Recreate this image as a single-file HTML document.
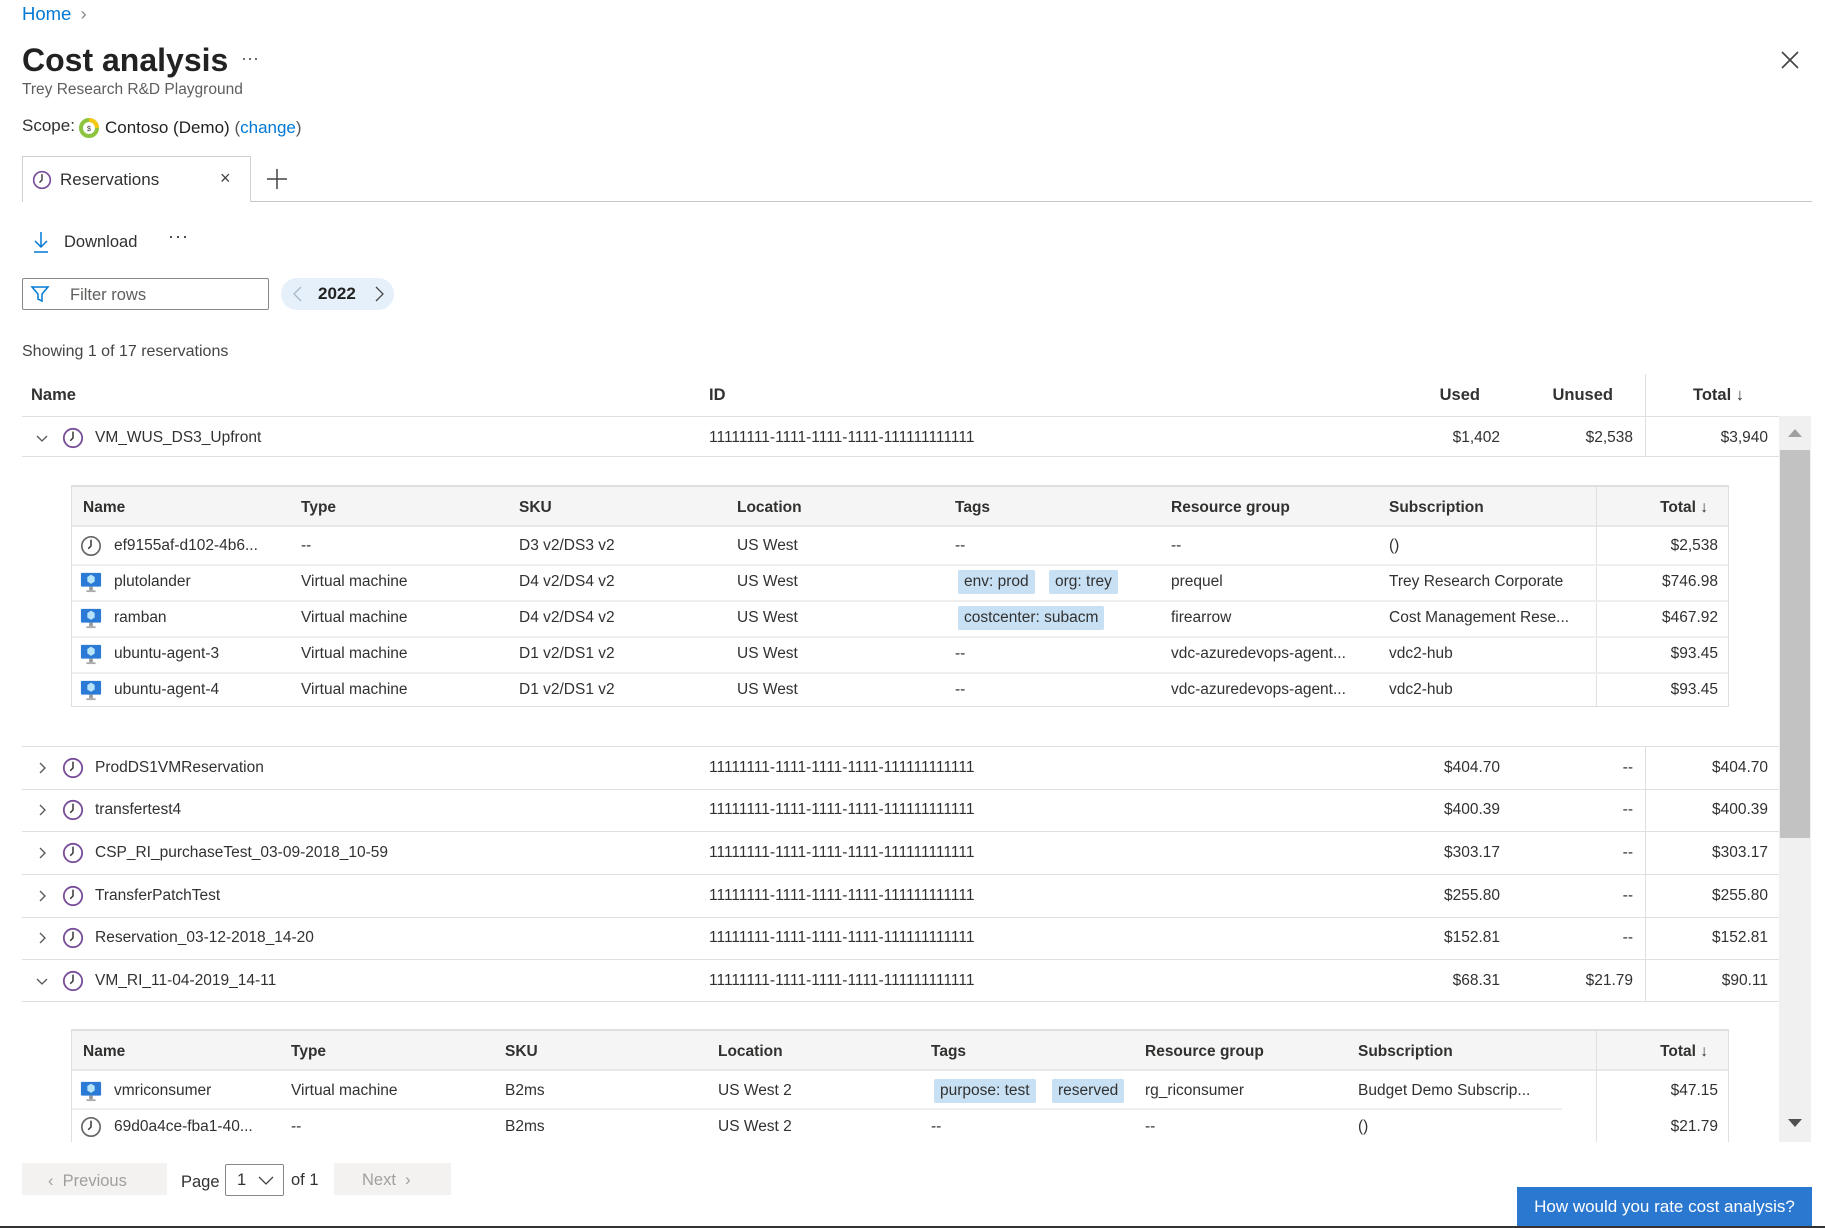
<!DOCTYPE html>
<html><head><meta charset="utf-8"><style>
*{margin:0;padding:0;box-sizing:border-box}
body{width:1825px;height:1228px;overflow:hidden;background:#fff;font-family:"Segoe UI","Liberation Sans",sans-serif;color:#323130;position:relative;font-size:15.5px}
.a{position:absolute;white-space:nowrap;line-height:20px}
.r{text-align:right}
.h{font-weight:600;color:#323130}
.ln{position:absolute;height:1px;background:#e1dfdd}
.vl{position:absolute;width:1px;background:#e1dfdd}
.tag{position:absolute;background:#c7e0f4;border-radius:2px;height:24px;line-height:24px;padding:0 6px;white-space:nowrap}
</style></head><body>
<svg width="0" height="0" style="position:absolute"><defs>
<symbol id="clk" viewBox="0 0 24 24"><circle cx="12" cy="12" r="10" fill="none" stroke="#7a4f9a" stroke-width="2"/><path d="M12 5v7l-3 3" fill="none" stroke="#333" stroke-width="1.6"/></symbol>
<symbol id="clkg" viewBox="0 0 24 24"><circle cx="12" cy="12" r="10" fill="none" stroke="#666" stroke-width="1.8"/><path d="M12 5v7l-3 3" fill="none" stroke="#333" stroke-width="1.6"/></symbol>
<symbol id="vm" viewBox="0 0 24 24"><rect x="1" y="2" width="22" height="15" rx="1" fill="#2b7bd6"/><path d="M12 4l4 2.5v5L12 14l-4-2.5v-5z" fill="#b8e4fa"/><rect x="10" y="17" width="4" height="4" fill="#999"/><rect x="7" y="21" width="10" height="2" fill="#aaa"/></symbol>
<symbol id="chr" viewBox="0 0 16 16"><path d="M6 3l5 5-5 5" fill="none" stroke="#555" stroke-width="1.3"/></symbol>
<symbol id="chd" viewBox="0 0 16 16"><path d="M3 6l5 5 5-5" fill="none" stroke="#555" stroke-width="1.3"/></symbol>
</defs></svg>

<div class="a" style="left:22px;top:4px;font-size:18.5px;color:#0078d4">Home <span style="color:#888;margin-left:4px">›</span></div>
<div class="a" style="left:22px;top:40px;font-size:32px;line-height:40px;font-weight:600;color:#222">Cost analysis</div>
<div class="a" style="left:241px;top:48px;font-size:18px;color:#555">···</div>
<div class="a" style="left:22px;top:80px;font-size:15.5px;color:#605e5c">Trey Research R&amp;D Playground</div>
<svg style="position:absolute;left:1780px;top:50px" width="20" height="20" viewBox="0 0 20 20"><path d="M2 2l16 16M18 2L2 18" stroke="#444" stroke-width="1.6"/></svg>
<div class="a" style="left:22px;top:116px;font-size:17px">Scope:</div>
<svg style="position:absolute;left:79px;top:118px" width="20" height="20" viewBox="0 0 20 20"><circle cx="10" cy="10" r="8" fill="none" stroke="#8cc43f" stroke-width="4"/><path d="M10 2a8 8 0 0 1 8 8" fill="none" stroke="#f2c811" stroke-width="4"/><text x="10" y="13" font-size="7" text-anchor="middle" fill="#333">$</text></svg>
<div class="a" style="left:105px;top:118px;font-size:17px;color:#222">Contoso (Demo) <span style="color:#555">(</span><span style="color:#0078d4">change</span><span style="color:#555">)</span></div>

<div style="position:absolute;left:22px;top:156px;width:229px;height:46px;border:1px solid #d2d0ce;border-bottom:none;background:#fff;z-index:2"></div>
<div class="ln" style="left:22px;top:201px;width:1790px;background:#c8c6c4"></div>
<svg style="position:absolute;left:32px;top:170px;z-index:3" width="20" height="20"><use href="#clk"/></svg>
<div class="a" style="left:60px;top:170px;font-size:17px;z-index:3">Reservations</div>
<div class="a" style="left:220px;top:168px;font-size:18px;z-index:3;color:#444">×</div>
<svg style="position:absolute;left:266px;top:168px" width="22" height="22"><path d="M11 1v20M1 11h20" stroke="#444" stroke-width="1.5"/></svg>

<svg style="position:absolute;left:32px;top:230px" width="18" height="24"><path d="M9 2v15M3 11l6 6 6-6M2 22h14" fill="none" stroke="#0078d4" stroke-width="1.5"/></svg>
<div class="a" style="left:64px;top:232px;font-size:16.5px">Download</div>
<div class="a" style="left:168px;top:226px;font-size:18px;letter-spacing:1px">···</div>

<div style="position:absolute;left:22px;top:278px;width:247px;height:32px;border:1px solid #8a8886;border-radius:2px"></div>
<svg style="position:absolute;left:30px;top:284px" width="20" height="20"><path d="M2 3h16l-6 7v7l-4-2v-5z" fill="none" stroke="#0078d4" stroke-width="1.5"/></svg>
<div class="a" style="left:70px;top:285px;font-size:16.5px;color:#605e5c">Filter rows</div>
<div style="position:absolute;left:281px;top:278px;width:113px;height:32px;border-radius:16px;background:#e6f0fa"></div>
<svg style="position:absolute;left:290px;top:285px" width="16" height="18"><path d="M11 2L4 9l7 7" fill="none" stroke="#a8b8c8" stroke-width="1.3"/></svg>
<div class="a" style="left:318px;top:284px;font-size:17px;font-weight:700;color:#222">2022</div>
<svg style="position:absolute;left:372px;top:285px" width="16" height="18"><path d="M4 2l7 7-7 7" fill="none" stroke="#444" stroke-width="1.3"/></svg>

<div class="a" style="left:22px;top:342px;font-size:16px;color:#444">Showing 1 of 17 reservations</div>

<!-- outer header -->
<div class="a h" style="left:31px;top:385px;font-size:16.5px">Name</div>
<div class="a h" style="left:709px;top:385px;font-size:16.5px">ID</div>
<div class="a h r" style="left:1400px;width:80px;top:385px;font-size:16.5px">Used</div>
<div class="a h r" style="left:1530px;width:83px;top:385px;font-size:16.5px">Unused</div>
<div class="a h r" style="left:1660px;width:84px;top:385px;font-size:16.5px">Total ↓</div>
<div class="vl" style="left:1645px;top:374px;height:42px"></div>
<div class="ln" style="left:22px;top:416px;width:1757px"></div>

<!-- row 1 -->
<svg style="position:absolute;left:34px;top:430px" width="16" height="16"><use href="#chd"/></svg>
<svg style="position:absolute;left:62px;top:427px" width="22" height="22"><use href="#clk"/></svg>
<div class="a" style="left:95px;top:428px">VM_WUS_DS3_Upfront</div>
<div class="a" style="left:709px;top:428px">11111111-1111-1111-1111-111111111111</div>
<div class="a r" style="left:1400px;width:100px;top:428px">$1,402</div>
<div class="a r" style="left:1533px;width:100px;top:428px">$2,538</div>
<div class="a r" style="left:1668px;width:100px;top:428px">$3,940</div>
<div class="vl" style="left:1645px;top:416px;height:40px"></div>
<div class="ln" style="left:22px;top:456px;width:1757px"></div>

<!-- subtable 1 -->
<div style="position:absolute;left:71px;top:485px;width:1658px;height:222px;border:1px solid #e1dfdd;border-top:2px solid #e1dfdd"></div>
<div style="position:absolute;left:72px;top:487px;width:1656px;height:40px;background:#f5f5f5;border-bottom:2px solid #e8e8e8"></div>
<div class="vl" style="left:1596px;top:487px;height:220px"></div>
<div class="a h" style="left:83px;top:498px">Name</div>
<div class="a h" style="left:301px;top:498px">Type</div>
<div class="a h" style="left:519px;top:498px">SKU</div>
<div class="a h" style="left:737px;top:498px">Location</div>
<div class="a h" style="left:955px;top:498px">Tags</div>
<div class="a h" style="left:1171px;top:498px">Resource group</div>
<div class="a h" style="left:1389px;top:498px">Subscription</div>
<div class="a h r" style="left:1620px;width:88px;top:498px">Total ↓</div>

<svg style="position:absolute;left:80px;top:535px" width="22" height="22"><use href="#clkg"/></svg>
<div class="a" style="left:114px;top:536px">ef9155af-d102-4b6...</div><div class="a" style="left:301px;top:536px">--</div><div class="a" style="left:519px;top:536px">D3 v2/DS3 v2</div><div class="a" style="left:737px;top:536px">US West</div><div class="a" style="left:955px;top:536px">--</div><div class="a" style="left:1171px;top:536px">--</div><div class="a" style="left:1389px;top:536px">()</div><div class="a r" style="left:1600px;width:118px;top:536px">$2,538</div>
<div class="ln" style="left:72px;top:564px;width:1656px;height:2px;background:#eee"></div>

<svg style="position:absolute;left:80px;top:571px" width="22" height="22"><use href="#vm"/></svg>
<div class="a" style="left:114px;top:572px">plutolander</div><div class="a" style="left:301px;top:572px">Virtual machine</div><div class="a" style="left:519px;top:572px">D4 v2/DS4 v2</div><div class="a" style="left:737px;top:572px">US West</div>
<div class="tag" style="left:958px;top:570px">env: prod</div><div class="tag" style="left:1049px;top:570px">org: trey</div>
<div class="a" style="left:1171px;top:572px">prequel</div><div class="a" style="left:1389px;top:572px">Trey Research Corporate</div><div class="a r" style="left:1600px;width:118px;top:572px">$746.98</div>
<div class="ln" style="left:72px;top:600px;width:1656px;height:2px;background:#eee"></div>

<svg style="position:absolute;left:80px;top:607px" width="22" height="22"><use href="#vm"/></svg>
<div class="a" style="left:114px;top:608px">ramban</div><div class="a" style="left:301px;top:608px">Virtual machine</div><div class="a" style="left:519px;top:608px">D4 v2/DS4 v2</div><div class="a" style="left:737px;top:608px">US West</div>
<div class="tag" style="left:958px;top:606px">costcenter: subacm</div>
<div class="a" style="left:1171px;top:608px">firearrow</div><div class="a" style="left:1389px;top:608px">Cost Management Rese...</div><div class="a r" style="left:1600px;width:118px;top:608px">$467.92</div>
<div class="ln" style="left:72px;top:636px;width:1656px;height:2px;background:#eee"></div>

<svg style="position:absolute;left:80px;top:643px" width="22" height="22"><use href="#vm"/></svg>
<div class="a" style="left:114px;top:644px">ubuntu-agent-3</div><div class="a" style="left:301px;top:644px">Virtual machine</div><div class="a" style="left:519px;top:644px">D1 v2/DS1 v2</div><div class="a" style="left:737px;top:644px">US West</div><div class="a" style="left:955px;top:644px">--</div><div class="a" style="left:1171px;top:644px">vdc-azuredevops-agent...</div><div class="a" style="left:1389px;top:644px">vdc2-hub</div><div class="a r" style="left:1600px;width:118px;top:644px">$93.45</div>
<div class="ln" style="left:72px;top:672px;width:1656px;height:2px;background:#eee"></div>

<svg style="position:absolute;left:80px;top:679px" width="22" height="22"><use href="#vm"/></svg>
<div class="a" style="left:114px;top:680px">ubuntu-agent-4</div><div class="a" style="left:301px;top:680px">Virtual machine</div><div class="a" style="left:519px;top:680px">D1 v2/DS1 v2</div><div class="a" style="left:737px;top:680px">US West</div><div class="a" style="left:955px;top:680px">--</div><div class="a" style="left:1171px;top:680px">vdc-azuredevops-agent...</div><div class="a" style="left:1389px;top:680px">vdc2-hub</div><div class="a r" style="left:1600px;width:118px;top:680px">$93.45</div>

<!-- outer rows -->
<div class="ln" style="left:22px;top:746px;width:1757px"></div>
<div class="vl" style="left:1645px;top:746px;height:255px"></div>

<svg style="position:absolute;left:34px;top:760px" width="16" height="16"><use href="#chr"/></svg><svg style="position:absolute;left:62px;top:757px" width="22" height="22"><use href="#clk"/></svg>
<div class="a" style="left:95px;top:758px">ProdDS1VMReservation</div><div class="a" style="left:709px;top:758px">11111111-1111-1111-1111-111111111111</div><div class="a r" style="left:1400px;width:100px;top:758px">$404.70</div><div class="a r" style="left:1533px;width:100px;top:758px">--</div><div class="a r" style="left:1668px;width:100px;top:758px">$404.70</div>
<div class="ln" style="left:22px;top:789px;width:1757px"></div>

<svg style="position:absolute;left:34px;top:802px" width="16" height="16"><use href="#chr"/></svg><svg style="position:absolute;left:62px;top:799px" width="22" height="22"><use href="#clk"/></svg>
<div class="a" style="left:95px;top:800px">transfertest4</div><div class="a" style="left:709px;top:800px">11111111-1111-1111-1111-111111111111</div><div class="a r" style="left:1400px;width:100px;top:800px">$400.39</div><div class="a r" style="left:1533px;width:100px;top:800px">--</div><div class="a r" style="left:1668px;width:100px;top:800px">$400.39</div>
<div class="ln" style="left:22px;top:831px;width:1757px"></div>

<svg style="position:absolute;left:34px;top:845px" width="16" height="16"><use href="#chr"/></svg><svg style="position:absolute;left:62px;top:842px" width="22" height="22"><use href="#clk"/></svg>
<div class="a" style="left:95px;top:843px">CSP_RI_purchaseTest_03-09-2018_10-59</div><div class="a" style="left:709px;top:843px">11111111-1111-1111-1111-111111111111</div><div class="a r" style="left:1400px;width:100px;top:843px">$303.17</div><div class="a r" style="left:1533px;width:100px;top:843px">--</div><div class="a r" style="left:1668px;width:100px;top:843px">$303.17</div>
<div class="ln" style="left:22px;top:874px;width:1757px"></div>

<svg style="position:absolute;left:34px;top:888px" width="16" height="16"><use href="#chr"/></svg><svg style="position:absolute;left:62px;top:885px" width="22" height="22"><use href="#clk"/></svg>
<div class="a" style="left:95px;top:886px">TransferPatchTest</div><div class="a" style="left:709px;top:886px">11111111-1111-1111-1111-111111111111</div><div class="a r" style="left:1400px;width:100px;top:886px">$255.80</div><div class="a r" style="left:1533px;width:100px;top:886px">--</div><div class="a r" style="left:1668px;width:100px;top:886px">$255.80</div>
<div class="ln" style="left:22px;top:917px;width:1757px"></div>

<svg style="position:absolute;left:34px;top:930px" width="16" height="16"><use href="#chr"/></svg><svg style="position:absolute;left:62px;top:927px" width="22" height="22"><use href="#clk"/></svg>
<div class="a" style="left:95px;top:928px">Reservation_03-12-2018_14-20</div><div class="a" style="left:709px;top:928px">11111111-1111-1111-1111-111111111111</div><div class="a r" style="left:1400px;width:100px;top:928px">$152.81</div><div class="a r" style="left:1533px;width:100px;top:928px">--</div><div class="a r" style="left:1668px;width:100px;top:928px">$152.81</div>
<div class="ln" style="left:22px;top:959px;width:1757px"></div>

<svg style="position:absolute;left:34px;top:973px" width="16" height="16"><use href="#chd"/></svg><svg style="position:absolute;left:62px;top:970px" width="22" height="22"><use href="#clk"/></svg>
<div class="a" style="left:95px;top:971px">VM_RI_11-04-2019_14-11</div><div class="a" style="left:709px;top:971px">11111111-1111-1111-1111-111111111111</div><div class="a r" style="left:1400px;width:100px;top:971px">$68.31</div><div class="a r" style="left:1533px;width:100px;top:971px">$21.79</div><div class="a r" style="left:1668px;width:100px;top:971px">$90.11</div>
<div class="ln" style="left:22px;top:1001px;width:1757px"></div>

<!-- subtable 2 -->
<div style="position:absolute;left:71px;top:1029px;width:1658px;height:113px;border:1px solid #e1dfdd;border-top:2px solid #e1dfdd;border-bottom:none"></div>
<div style="position:absolute;left:72px;top:1031px;width:1656px;height:40px;background:#f5f5f5;border-bottom:2px solid #e8e8e8"></div>
<div class="vl" style="left:1596px;top:1031px;height:111px"></div>
<div class="a h" style="left:83px;top:1042px">Name</div><div class="a h" style="left:291px;top:1042px">Type</div><div class="a h" style="left:505px;top:1042px">SKU</div><div class="a h" style="left:718px;top:1042px">Location</div><div class="a h" style="left:931px;top:1042px">Tags</div><div class="a h" style="left:1145px;top:1042px">Resource group</div><div class="a h" style="left:1358px;top:1042px">Subscription</div><div class="a h r" style="left:1620px;width:88px;top:1042px">Total ↓</div>

<svg style="position:absolute;left:80px;top:1080px" width="22" height="22"><use href="#vm"/></svg>
<div class="a" style="left:114px;top:1081px">vmriconsumer</div><div class="a" style="left:291px;top:1081px">Virtual machine</div><div class="a" style="left:505px;top:1081px">B2ms</div><div class="a" style="left:718px;top:1081px">US West 2</div>
<div class="tag" style="left:934px;top:1079px">purpose: test</div><div class="tag" style="left:1052px;top:1079px">reserved</div>
<div class="a" style="left:1145px;top:1081px">rg_riconsumer</div><div class="a" style="left:1358px;top:1081px">Budget Demo Subscrip...</div><div class="a r" style="left:1600px;width:118px;top:1081px">$47.15</div>
<div class="ln" style="left:72px;top:1108px;width:1490px;height:2px;background:#eee"></div>

<svg style="position:absolute;left:80px;top:1116px" width="22" height="22"><use href="#clkg"/></svg>
<div class="a" style="left:114px;top:1117px">69d0a4ce-fba1-40...</div><div class="a" style="left:291px;top:1117px">--</div><div class="a" style="left:505px;top:1117px">B2ms</div><div class="a" style="left:718px;top:1117px">US West 2</div><div class="a" style="left:931px;top:1117px">--</div><div class="a" style="left:1145px;top:1117px">--</div><div class="a" style="left:1358px;top:1117px">()</div><div class="a r" style="left:1600px;width:118px;top:1117px">$21.79</div>

<!-- scrollbar -->
<div style="position:absolute;left:1779px;top:416px;width:32px;height:726px;background:#f0f0f0"></div>
<div style="position:absolute;left:1780px;top:450px;width:30px;height:388px;background:#c2c2c2"></div>
<svg style="position:absolute;left:1787px;top:428px" width="16" height="10"><path d="M1 9l7-8 7 8z" fill="#a0a0a0"/></svg>
<svg style="position:absolute;left:1787px;top:1118px" width="16" height="10"><path d="M1 1l7 8 7-8z" fill="#505050"/></svg>

<!-- pagination -->
<div style="position:absolute;left:22px;top:1163px;width:145px;height:32px;background:#f3f2f1"></div>
<div class="a" style="left:48px;top:1171px;color:#a19f9d;font-size:16.5px">‹ &nbsp;Previous</div>
<div class="a" style="left:181px;top:1172px;font-size:16.5px">Page</div>
<div style="position:absolute;left:225px;top:1164px;width:59px;height:32px;border:1px solid #8a8886;border-radius:2px"></div>
<div class="a" style="left:237px;top:1170px;font-size:16.5px">1</div>
<svg style="position:absolute;left:258px;top:1174px" width="16" height="12"><path d="M1 3l7 7 7-7" fill="none" stroke="#444" stroke-width="1.3"/></svg>
<div class="a" style="left:291px;top:1170px;font-size:16.5px">of 1</div>
<div style="position:absolute;left:334px;top:1163px;width:117px;height:32px;background:#f3f2f1"></div>
<div class="a" style="left:362px;top:1170px;color:#a19f9d;font-size:16.5px">Next &nbsp;›</div>

<div style="position:absolute;left:1517px;top:1187px;width:295px;height:39px;background:#2b78d0;color:#fff;font-size:17px;line-height:39px;text-align:center">How would you rate cost analysis?</div>
<div style="position:absolute;left:0;top:1226px;width:1825px;height:2px;background:#333"></div>
</body></html>
